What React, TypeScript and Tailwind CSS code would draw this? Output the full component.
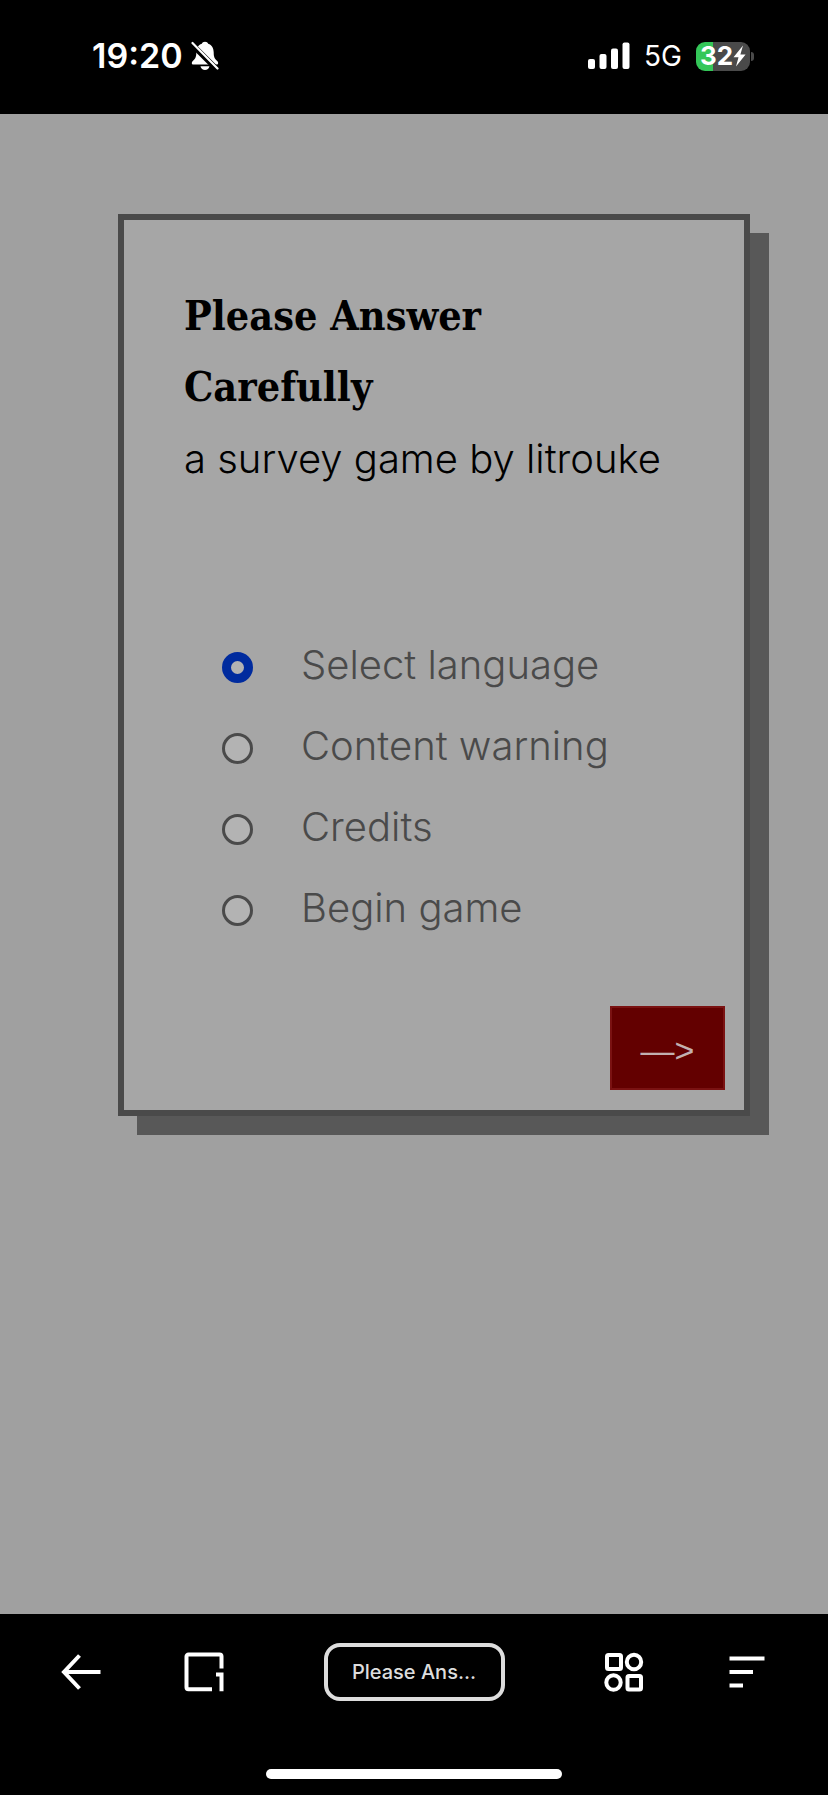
import React from 'react';

const OPTIONS = ['Select language', 'Content warning', 'Credits', 'Begin game'];

const BellOffIcon = () => (
  <svg viewBox="0 0 28 30" className="h-[30px] w-7" aria-hidden="true">
    <path d="M14 0.8c-1.600 0-2.800.9-3.200 2C7 4 5.300 7.500 5.300 11.500c0 5-1.300 6.500-3.500 8.500-1.300 1.200-1.500 3.600.7 3.600h23c2.200 0 2-2.400.7-3.600-2.200-2-3.500-3.500-3.500-8.500 0-4-1.700-7.500-5.500-8.700-.4-1.100-1.600-2-3.200-2z" fill="#fff" />
    <path d="M9.500 25.300h9c-.4 2.200-2.300 3.700-4.500 3.700s-4.100-1.500-4.500-3.700z" fill="#fff" />
    <path d="M0 2.500 26 28.500" stroke="#000" strokeWidth="5.5" />
    <path d="M1.500 2 26.500 27.500" stroke="#fff" strokeWidth="2.2" strokeLinecap="round" />
  </svg>
);

const SignalIcon = () => (
  <svg viewBox="0 0 42 28" className="h-7 w-[42px]" fill="#fff" aria-hidden="true">
    <rect x="0" y="17" width="7" height="10" rx="2" />
    <rect x="11.5" y="12" width="7" height="15" rx="2" />
    <rect x="23" y="6.5" width="7" height="20.5" rx="2" />
    <rect x="34.5" y="0.5" width="7" height="26.5" rx="2" />
  </svg>
);

const StatusBar = () => (
  <header className="flex h-[114px] shrink-0 items-center justify-between bg-black pb-0.5 pl-[92px] pr-[74px] text-white">
    <div className="flex items-center gap-2">
      <span className="text-[34px] font-semibold leading-10">19:20</span>
      <BellOffIcon />
    </div>
    <div className="flex items-center">
      <SignalIcon />
      <span className="ml-[14px] text-[28px] leading-10">5G</span>
      <div className="ml-[14px] flex items-center gap-px">
        <div className="flex h-[29px] w-[54px] items-center justify-center rounded-[9px] bg-[linear-gradient(to_right,#34c759_32%,#4a4a4a_32%)]">
          <span className="text-[26px] font-bold leading-7">32</span>
          <svg viewBox="0 0 13 22" className="h-[22px] w-[13px]" fill="#fff" aria-hidden="true">
            <path d="M10 0.5 0.5 12.200h5L3 21.500 12.600 9.400H7.400z" />
          </svg>
        </div>
        <div className="h-[9px] w-[3px] rounded-r-full bg-[#4a4a4a]" />
      </div>
    </div>
  </header>
);

const SurveyCard = () => {
  const [selected, setSelected] = React.useState(OPTIONS[0]);

  return (
    <section className="mb-12 ml-[118px] mr-[78px] mt-[100px] border-[6px] border-[#4a4a4a] bg-[#a6a6a6] shadow-[19px_19px_0_0_#585858]">
      <div className="pl-[60px] pr-5 pt-[61px] leading-[71px] text-black">
        <h1 className="max-w-md font-['DejaVu_Serif_Condensed','DejaVu_Serif',serif] text-[41px] font-bold">Please Answer Carefully</h1>
        <p className="text-[40px] font-light">a survey game by litrouke</p>
      </div>

      <fieldset className="mt-[133px] pl-[98px]">
        {OPTIONS.map((option) => (
          <label key={option} className="flex h-[81px] items-center gap-12">
            <input
              type="radio"
              name="menu"
              checked={selected === option}
              onChange={() => setSelected(option)}
              className="h-[31px] w-[31px] appearance-none rounded-full border-[3px] border-[#4a4a4a] bg-[#b3b3b3] checked:border-[9px] checked:border-[#002b9e]"
            />
            <span className="pb-1.5 text-[40px] font-light leading-[48px] text-[#4a4a4a]">{option}</span>
          </label>
        ))}
      </fieldset>

      <div className="flex justify-end pb-5 pr-[19px] pt-[55px]">
        <button
          type="button"
          aria-label="Next"
          className="h-[84px] w-[115px] border-2 border-[#7a1212] bg-[#630000] pt-1 font-['Liberation_Sans',sans-serif] text-[34px] text-[#c2b0b0]"
        >
          —&gt;
        </button>
      </div>
    </section>
  );
};

const BottomBar = () => (
  <nav className="flex h-[181px] shrink-0 flex-col items-center justify-between bg-black pb-4 pt-[29px] text-white">
    <div className="flex w-full items-center justify-between pl-[61px] pr-[63px]">
      <div className="flex items-center gap-[83px]">
        <button type="button" aria-label="Back">
          <svg viewBox="0 0 40 40" className="h-10 w-10" fill="none" stroke="#fff" strokeWidth="4">
            <path d="M39.500 20H3M18.500 3.500 3 20l15.500 16.500" />
          </svg>
        </button>
        <button type="button" aria-label="Tabs">
          <svg viewBox="0 0 40 40" className="h-10 w-10" fill="none" stroke="#fff" strokeWidth="4">
            <path d="M28 37.300H4.500a2 2 0 0 1-2-2V4.500a2 2 0 0 1 2-2h31a2 2 0 0 1 2 2V16.500" />
            <path d="M32 22.500h5.500V39.300" />
          </svg>
        </button>
      </div>
      <button type="button" className="h-[58px] w-[181px] rounded-[16px] border-4 border-[#dddddd] text-[20px] font-medium text-[#dddddd]">
        Please Ans...
      </button>
      <div className="flex items-center gap-[85px]">
        <button type="button" aria-label="Apps">
          <svg viewBox="0 0 40 40" className="h-10 w-10" fill="none" stroke="#fff" strokeWidth="4">
            <rect x="3" y="3" width="14" height="14" rx="1.5" />
            <circle cx="30" cy="10" r="7.2" />
            <circle cx="9.500" cy="30.500" r="7.2" />
            <rect x="23.5" y="24" width="13.5" height="13.5" rx="1.5" />
          </svg>
        </button>
        <button type="button" aria-label="Menu">
          <svg viewBox="0 0 36 40" className="h-10 w-9" fill="none" stroke="#fff" strokeWidth="4">
            <path d="M0.500 6.500H35.500M0.500 20H24M0.500 33.500H14" />
          </svg>
        </button>
      </div>
    </div>
    <div className="h-[10px] w-[296px] rounded-full bg-white" />
  </nav>
);

export default function App() {
  return (
    <div className="flex min-h-screen flex-col bg-[#a0a0a0] font-['Inter',sans-serif]">
      <StatusBar />
      <main className="flex-1">
        <SurveyCard />
      </main>
      <BottomBar />
    </div>
  );
}
